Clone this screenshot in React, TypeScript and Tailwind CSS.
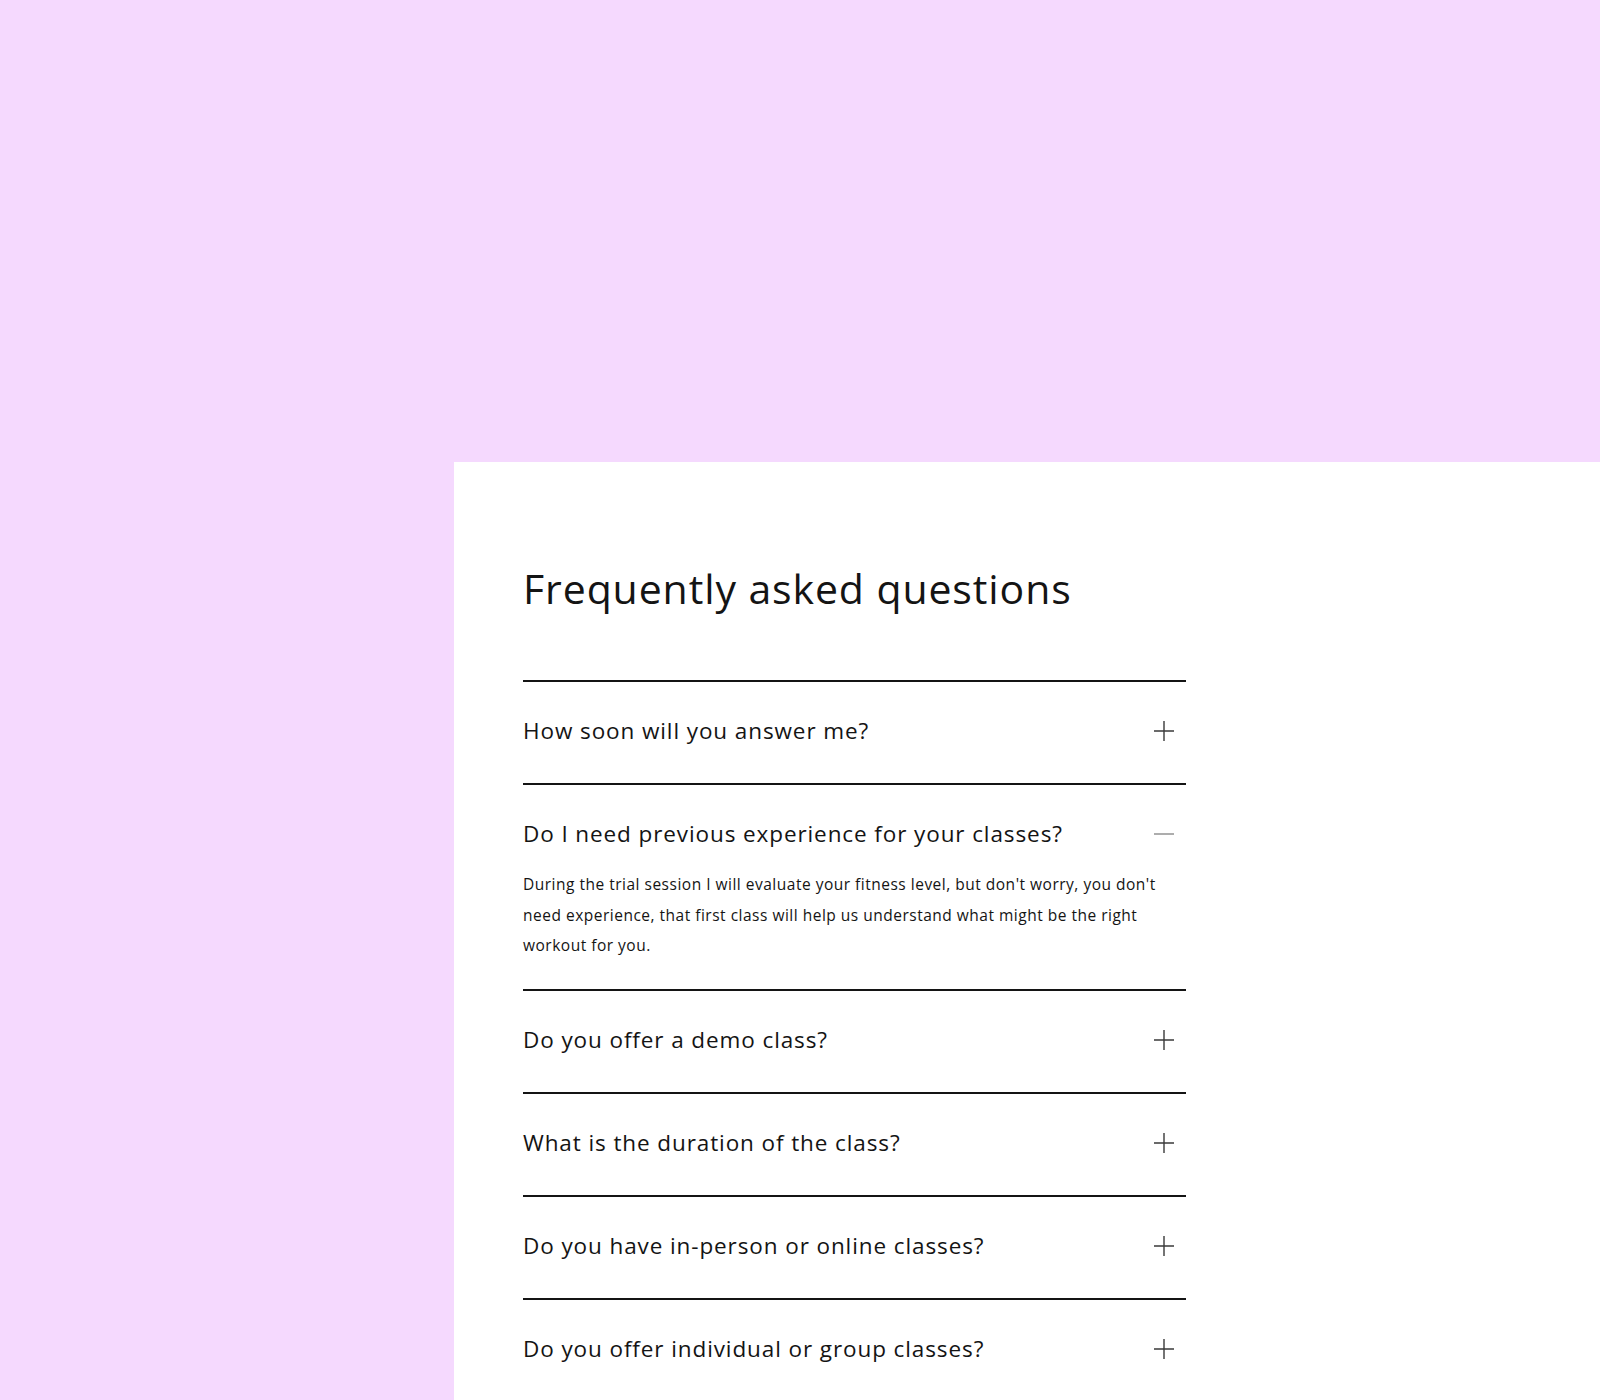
import React from "react";

const items = [
  { q: "How soon will you answer me?", open: false },
  {
    q: "Do I need previous experience for your classes?",
    open: true,
    a: "During the trial session I will evaluate your fitness level, but don't worry, you don't need experience, that first class will help us understand what might be the right workout for you.",
  },
  { q: "Do you offer a demo class?", open: false },
  { q: "What is the duration of the class?", open: false },
  { q: "Do you have in-person or online classes?", open: false },
  { q: "Do you offer individual or group classes?", open: false },
];

function Plus() {
  return (
    <svg width="22" height="22" viewBox="0 0 22 22" className="shrink-0">
      <path d="M11 1V21M1 11H21" stroke="#3a3a3a" strokeWidth="1.4" fill="none" />
    </svg>
  );
}

function Minus() {
  return (
    <svg width="22" height="22" viewBox="0 0 22 22" className="shrink-0">
      <path d="M1 11H21" stroke="#8a8a8a" strokeWidth="1.4" fill="none" />
    </svg>
  );
}

export default function App() {
  return (
    <div
      className="min-h-[1400px] w-[1600px] bg-[#f5d9fe] pt-[462px] pl-[454px]"
      style={{ fontFamily: "'Open Sans', 'Noto Sans', sans-serif" }}
    >
      <div className="h-[938px] bg-white pt-[102px] pl-[69px]">
        <h2 className="text-[41px] leading-[48px] text-[#141414] tracking-[0.9px]">
          Frequently asked questions
        </h2>
        <div className="mt-[68px] w-[663px]">
          {items.map((it) => (
            <div key={it.q} className="border-t-2 border-[#141414]">
              <div className="flex items-center justify-between pt-[37px] pr-[11px]">
                <span className="text-[22.5px] leading-[24px] text-[#141414] tracking-[0.9px]">{it.q}</span>
                {it.open ? <Minus /> : <Plus />}
              </div>
              {it.open ? (
                <p className="mt-[23px] pb-[28px] text-[15.5px] leading-[30.6px] text-[#141414] tracking-[0.5px]">
                  {it.a}
                </p>
              ) : (
                <div className="h-[40px]" />
              )}
            </div>
          ))}
        </div>
      </div>
    </div>
  );
}
